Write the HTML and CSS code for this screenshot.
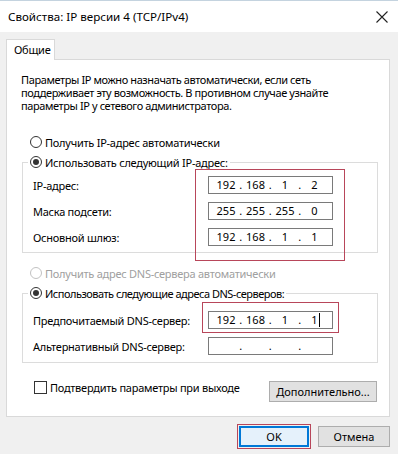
FILE: index.html
```html
<!DOCTYPE html>
<html lang="ru">
<head>
  <meta charset="UTF-8">
  <title>Свойства: IP версии 4 (TCP/IPv4)</title>
  <link rel="stylesheet" href="styles.css">
</head>
<body>
  <div class="window">
    <div class="titlebar">
      <span class="title">Свойства: IP версии 4 (TCP/IPv4)</span>
      <svg class="close" width="12" height="12" viewBox="0 0 12 12">
        <path d="M0.5 0.5 L11.5 11.5 M11.5 0.5 L0.5 11.5" stroke="#222" stroke-width="1.1" fill="none"/>
      </svg>
    </div>
    <div class="body">
      <div class="tabs">
        <div class="tab">Общие</div>
      </div>
      <div class="panel">
        <p class="desc">Параметры IP можно назначать автоматически, если сеть<br>поддерживает эту возможность. В противном случае узнайте<br>параметры IP у сетевого администратора.</p>

        <label class="radio-row first"><span class="radio"></span>Получить IP-адрес автоматически</label>
        <div class="group">
          <label class="radio-row head"><span class="radio checked"></span>Использовать следующий IP-адрес:</label>
          <div class="field-row">
            <span class="field-label">IP-адрес:</span>
            <div class="ip"><span class="oct">192</span><span class="dot">.</span><span class="oct">168</span><span class="dot">.</span><span class="oct">1</span><span class="dot">.</span><span class="oct">2</span></div>
          </div>
          <div class="field-row">
            <span class="field-label">Маска подсети:</span>
            <div class="ip"><span class="oct">255</span><span class="dot">.</span><span class="oct">255</span><span class="dot">.</span><span class="oct">255</span><span class="dot">.</span><span class="oct">0</span></div>
          </div>
          <div class="field-row">
            <span class="field-label">Основной шлюз:</span>
            <div class="ip"><span class="oct">192</span><span class="dot">.</span><span class="oct">168</span><span class="dot">.</span><span class="oct">1</span><span class="dot">.</span><span class="oct">1</span></div>
          </div>
          <div class="mark mark-ip"></div>
        </div>

        <label class="radio-row disabled"><span class="radio"></span>Получить адрес DNS-сервера автоматически</label>
        <div class="group dns">
          <label class="radio-row head"><span class="radio checked"></span>Использовать следующие адреса DNS-серверов:</label>
          <div class="field-row">
            <span class="field-label">Предпочитаемый DNS-сервер:</span>
            <div class="ip"><span class="oct">192</span><span class="dot">.</span><span class="oct">168</span><span class="dot">.</span><span class="oct">1</span><span class="dot">.</span><span class="oct">1<i class="caret"></i></span></div>
          </div>
          <div class="field-row">
            <span class="field-label">Альтернативный DNS-сервер:</span>
            <div class="ip"><span class="oct"></span><span class="dot">.</span><span class="oct"></span><span class="dot">.</span><span class="oct"></span><span class="dot">.</span><span class="oct"></span></div>
          </div>
          <div class="mark mark-dns"></div>
        </div>

        <div class="bottom-row">
          <label class="check-row"><span class="checkbox"></span>Подтвердить параметры при выходе</label>
          <button class="btn advanced">Дополнительно...</button>
        </div>
      </div>
      <div class="actions">
        <button class="btn ok">OK</button>
        <button class="btn">Отмена</button>
      </div>
    </div>
  </div>
</body>
</html>
```

FILE: styles.css
```css
body {
  margin: 0;
  width: 398px;
  height: 454px;
  overflow: hidden;
  font-family: 'Noto Sans', 'Open Sans', sans-serif;
  font-size: 11px;
  letter-spacing: -0.25px;
  color: #000;
  background: #f0f0f0;
}
.window {
  height: 454px;
  display: flex;
  flex-direction: column;
}
.titlebar {
  height: 32px;
  flex: none;
  background: #fff;
  border-top: 1px solid #c4d3df;
  box-sizing: border-box;
  display: flex;
  align-items: center;
  justify-content: space-between;
  padding: 0 9px 0 8px;
}
.title {
  font-size: 11.6px;
  letter-spacing: 0;
  color: #000;
}
.close {
  margin-right: 1px;
}
.body {
  flex: 1;
  background: #f0f0f0;
  padding: 7px 0 0 6px;
}
.tabs {
  display: flex;
  height: 20px;
}
.tab {
  width: 49px;
  height: 21px;
  box-sizing: border-box;
  background: #fff;
  border: 1px solid #d9d9d9;
  border-bottom: none;
  padding-left: 7px;
  line-height: 19px;
  position: relative;
  z-index: 1;
}
.panel {
  width: 384px;
  height: 358px;
  box-sizing: border-box;
  background: #fff;
  border: 1px solid #d9d9d9;
}
.desc {
  margin: 13px 0 0 14px;
  line-height: 13px;
  letter-spacing: -0.4px;
}
.radio-row {
  display: flex;
  align-items: center;
  height: 20px;
  white-space: nowrap;
}
.radio-row.first {
  margin: 20px 0 0 23px;
}
.radio-row.disabled {
  margin: 10px 0 0 23px;
  color: #a0a0a0;
}
.radio {
  width: 12px;
  height: 12px;
  box-sizing: border-box;
  border: 1px solid #333;
  border-radius: 50%;
  background: #fff;
  margin-right: 3px;
  display: flex;
  align-items: center;
  justify-content: center;
}
.radio.checked::after {
  content: '';
  width: 6px;
  height: 6px;
  border-radius: 50%;
  background: #333;
}
.disabled .radio {
  border-color: #c2c2c2;
}
.group {
  position: relative;
  margin: 10px 11px 0 15px;
  border: 1px solid #dcdcdc;
  padding: 0 0 2px 10px;
}
.group.dns {
  padding-bottom: 3px;
}
.group.dns .radio-row.head {
  margin-bottom: 4px;
  letter-spacing: -0.5px;
}
.radio-row.head {
  width: max-content;
  margin: -11px 0 0 -5px;
  padding: 0 2px;
  background: #fff;
}
.field-row {
  display: flex;
  align-items: center;
  height: 26px;
  white-space: nowrap;
}
.field-label {
  width: 175px;
  flex: none;
}
.ip {
  width: 125px;
  height: 18px;
  box-sizing: border-box;
  border: 1px solid #7a7a7a;
  background: #fff;
  display: flex;
  align-items: center;
  padding-left: 6px;
  line-height: 16px;
  letter-spacing: 0;
}
.oct {
  width: 22px;
  text-align: center;
  position: relative;
}
.dot {
  width: 7.5px;
  text-align: center;
}
.caret {
  position: absolute;
  top: 1px;
  margin-left: 1px;
  width: 1px;
  height: 14px;
  background: #000;
}
.mark {
  position: absolute;
  border: 1px solid #b8465a;
  pointer-events: none;
}
.mark-ip {
  left: 172px;
  top: 6px;
  width: 148px;
  height: 90px;
}
.mark-dns {
  left: 179px;
  top: 8px;
  width: 135px;
  height: 29px;
}
.bottom-row {
  display: flex;
  justify-content: space-between;
  align-items: flex-start;
  margin: 18px 12px 0 27px;
}
.check-row {
  display: flex;
  align-items: center;
  height: 13px;
  white-space: nowrap;
}
.checkbox {
  width: 13px;
  height: 13px;
  box-sizing: border-box;
  border: 1px solid #333;
  background: #fff;
  margin-right: 3px;
}
.btn {
  font: inherit;
  letter-spacing: 0;
  color: #000;
  background: #e1e1e1;
  border: 1px solid #adadad;
  height: 21px;
  padding: 0;
  box-sizing: border-box;
}
.advanced {
  width: 108px;
}
.actions {
  display: flex;
  justify-content: flex-end;
  gap: 9px;
  margin: 9px 8px 0 0;
}
.actions .btn {
  width: 72px;
}
.actions .btn.ok {
  width: 70px;
  border: 2px solid #0078d7;
  outline: 1px solid #b8465a;
  outline-offset: 1px;
  background: #e5f1fb;
}
```
